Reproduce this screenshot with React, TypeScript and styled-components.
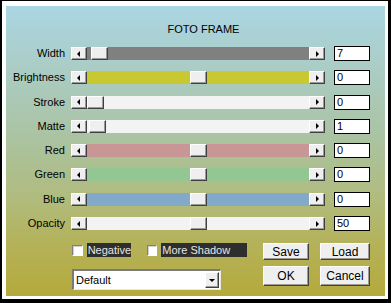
import React from "react";
import styled, { createGlobalStyle, css } from "styled-components";

const GlobalStyle = createGlobalStyle`
  html, body {
    margin: 0;
    padding: 0;
    background: #ffffff;
  }
  body {
    font-family: "Liberation Sans", Arial, sans-serif;
    font-size: 11px;
    color: #000;
  }
`;

const raised = css`
  background: #efefef;
  border-style: solid;
  border-width: 1px;
  border-color: #ffffff #404040 #404040 #ffffff;
  box-shadow: inset -1px -1px 0 #9a9a9a;
  box-sizing: border-box;
`;

const Window = styled.div`
  width: 391px;
  height: 303px;
  box-sizing: border-box;
  background: #ffffff;
  border-style: solid;
  border-color: #000;
  border-width: 1px 3px 4px 2px;
  padding: 5px 3px 3px 4px;
  display: flex;
`;

const Panel = styled.div`
  flex: 1;
  display: flex;
  flex-direction: column;
  background: linear-gradient(
    to bottom,
    #aad6e4 0%,
    #aacbbf 25%,
    #aac3a2 45%,
    #b0bc80 65%,
    #b4b25a 82%,
    #b5a93b 100%
  );
`;

const Title = styled.div`
  margin-top: 17px;
  padding-left: 16px;
  height: 13px;
  line-height: 13px;
  text-align: center;
`;

const Rows = styled.div`
  margin-top: 10px;
  display: flex;
  flex-direction: column;
  gap: 9.3px;
`;

const Row = styled.div`
  display: flex;
  align-items: center;
  height: 15px;
`;

const Label = styled.div`
  width: 59px;
  margin-right: 6px;
  text-align: right;
  line-height: 13px;
  white-space: nowrap;
`;

const ScrollBar = styled.div`
  width: 254px;
  height: 13px;
  margin-right: 9px;
  display: flex;
`;

const ArrowButton = styled.div<{ $dir: "left" | "right" }>`
  ${raised};
  width: 16px;
  height: 13px;
  display: flex;
  align-items: center;
  justify-content: center;

  &::after {
    content: "";
    width: 0;
    height: 0;
    border-top: 3px solid transparent;
    border-bottom: 3px solid transparent;
    ${({ $dir }) =>
      $dir === "left"
        ? "border-right: 3px solid #000; margin-left: -1px;"
        : "border-left: 3px solid #000; margin-left: 1px;"}
  }
`;

const Track = styled.div<{ $color: string }>`
  flex: 1;
  position: relative;
  background: ${({ $color }) => $color};
`;

const Thumb = styled.div`
  ${raised};
  position: absolute;
  top: 0;
  width: 17px;
  height: 13px;
`;

const ValueBox = styled.div`
  width: 36px;
  height: 15px;
  box-sizing: border-box;
  border: 1px solid #000;
  background: #fff;
  padding-left: 2px;
  line-height: 13px;
`;

const Bottom = styled.div`
  margin-top: 12px;
  margin-left: 66px;
  display: flex;
`;

const LeftColumn = styled.div`
  width: 191px;
  display: flex;
  flex-direction: column;
`;

const CheckRow = styled.div`
  display: flex;
  align-items: center;
  height: 14px;
`;

const CheckBox = styled.div`
  width: 11px;
  height: 11px;
  box-sizing: border-box;
  background: #fff;
  border-style: solid;
  border-width: 1px;
  border-color: #808080 #ffffff #ffffff #808080;
  box-shadow: inset 1px 1px 0 #d0d0d0;
  margin-right: 4px;
`;

const CheckLabel = styled.div<{ $width: number }>`
  width: ${({ $width }) => $width}px;
  height: 14px;
  line-height: 14px;
  background: #2e2e2e;
  color: #e6e6e6;
  padding-left: 1px;
  box-sizing: border-box;
  margin-right: 16px;
  white-space: nowrap;
`;

const Select = styled.div`
  margin-top: 12px;
  width: 149px;
  height: 21px;
  box-sizing: border-box;
  background: #fff;
  border-style: solid;
  border-width: 2px 1px 1px 2px;
  border-color: #7a7a7a #e8e8e8 #e8e8e8 #7a7a7a;
  display: flex;
  align-items: center;
  justify-content: space-between;
  padding: 0 1px 0 2px;
`;

const DropButton = styled.div`
  ${raised};
  width: 14px;
  height: 16px;
  display: flex;
  align-items: center;
  justify-content: center;

  &::after {
    content: "";
    border-left: 3px solid transparent;
    border-right: 3px solid transparent;
    border-top: 3px solid #000;
    margin-top: 1px;
  }
`;

const ButtonGrid = styled.div`
  display: grid;
  grid-template-columns: 46px 50px;
  grid-template-rows: 17px 20px;
  column-gap: 11px;
  row-gap: 6px;
`;

const Button = styled.div`
  ${raised};
  display: flex;
  align-items: center;
  justify-content: center;
  font-size: 12px;
`;

type Setting = {
  label: string;
  value: number;
  min: number;
  max: number;
  color: string;
};

const settings: Setting[] = [
  { label: "Width", value: 7, min: 0, max: 400, color: "#808080" },
  { label: "Brightness", value: 0, min: -100, max: 100, color: "#c8c832" },
  { label: "Stroke", value: 0, min: 0, max: 100, color: "#f3f3f3" },
  { label: "Matte", value: 1, min: 0, max: 100, color: "#f3f3f3" },
  { label: "Red", value: 0, min: -100, max: 100, color: "#c99696" },
  { label: "Green", value: 0, min: -100, max: 100, color: "#92c792" },
  { label: "Blue", value: 0, min: -100, max: 100, color: "#82a9c9" },
  { label: "Opacity", value: 50, min: 0, max: 100, color: "#f3f3f3" },
];

const TRAVEL = 222 - 17;

const SliderRow: React.FC<Setting> = ({ label, value, min, max, color }) => {
  const left = Math.round(((value - min) / (max - min)) * TRAVEL);
  return (
    <Row>
      <Label>{label}</Label>
      <ScrollBar>
        <ArrowButton $dir="left" />
        <Track $color={color}>
          <Thumb style={{ left }} />
        </Track>
        <ArrowButton $dir="right" />
      </ScrollBar>
      <ValueBox>{value}</ValueBox>
    </Row>
  );
};

export default function App() {
  return (
    <>
      <GlobalStyle />
      <Window>
        <Panel>
          <Title>FOTO FRAME</Title>
          <Rows>
            {settings.map((s) => (
              <SliderRow key={s.label} {...s} />
            ))}
          </Rows>
          <Bottom>
            <LeftColumn>
              <CheckRow>
                <CheckBox />
                <CheckLabel $width={44}>Negative</CheckLabel>
                <CheckBox />
                <CheckLabel $width={89}>More Shadow</CheckLabel>
              </CheckRow>
              <Select>
                <span>Default</span>
                <DropButton />
              </Select>
            </LeftColumn>
            <ButtonGrid>
              <Button>Save</Button>
              <Button>Load</Button>
              <Button>OK</Button>
              <Button>Cancel</Button>
            </ButtonGrid>
          </Bottom>
        </Panel>
      </Window>
    </>
  );
}
